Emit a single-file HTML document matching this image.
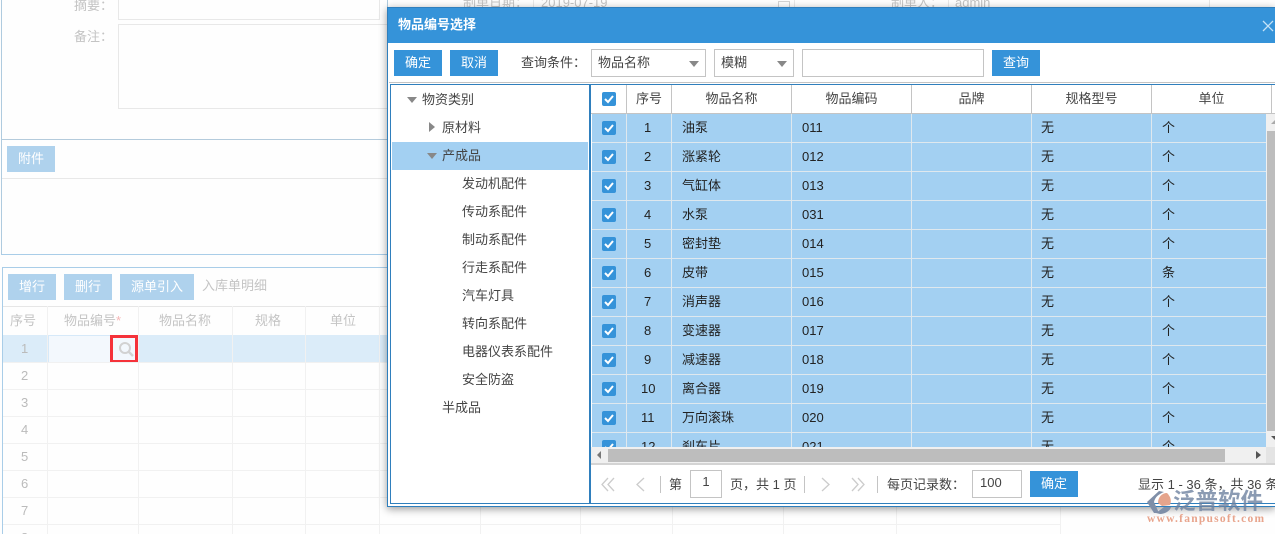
<!DOCTYPE html>
<html><head><meta charset="utf-8"><style>
*{box-sizing:border-box}
html,body{margin:0;padding:0;width:1275px;height:534px;overflow:hidden;background:#fefefe}
body{position:relative;font:13px/20px "Liberation Sans","Noto Sans CJK SC",sans-serif;color:#333}
div,span{position:absolute;white-space:nowrap}
.g{color:#c4c4c4}
.bb{background:#afd2ed;color:#fff;height:26px;line-height:25px;text-align:center}
.b{background:#3593d9;color:#fff;height:26px;line-height:25px;text-align:center;width:48px}
.hl{height:1px;background:#f1f1f1}
.vl{width:1px;background:#f1f1f1}
.th{top:85px;height:28px;line-height:27px;text-align:center;border-right:1px solid #c4c4c4;color:#444}
.t{left:0;height:20px;color:#444}
.row{left:592px;width:674px;height:29px;background:#a3d0f2;border-bottom:1px solid #dfe8ee;color:#222}
.row span{top:3px;height:22px;line-height:22px}
.sep{top:0;width:1px;height:29px;background:#dfe8ee}
.cb{left:10px;top:7px;width:14px;height:14px;background:#3593d9;border-radius:2px}
.cb svg{position:absolute;left:0;top:0}
.sel{top:49px;height:28px;border:1px solid #c4c4c4;line-height:25px;padding-left:6px;color:#444;background:#fff}
.sel i{position:absolute;top:11px;width:0;height:0;border:5px solid transparent;border-top:6px solid #888;border-bottom:0}
.gt{width:0;height:0;border:5px solid transparent;border-top:6px solid #888;border-bottom:0}
</style></head><body>
<!-- background form -->
<div style="left:1px;top:-2px;width:387px;height:257px;border:1px solid #afcbdf;border-bottom-color:#a9cde8"></div>
<div class="g" style="left:74px;top:-4px">摘要：</div>
<div style="left:118px;top:-5px;width:262px;height:25px;border:1px solid #e8e8e8"></div>
<div class="g" style="left:74px;top:27px">备注：</div>
<div style="left:118px;top:24px;width:270px;height:85px;border:1px solid #e8e8e8"></div>
<div style="left:2px;top:139px;width:386px;height:1px;background:#b4cbdc"></div>
<div class="bb" style="left:7px;top:146px;width:48px">附件</div>
<div style="left:2px;top:178px;width:386px;height:1px;background:#e8e8e8"></div>
<div class="g" style="left:463px;top:-7px;font-size:13px">制单日期：</div>
<div style="left:533px;top:0;width:1px;height:8px;background:#e8e8e8"></div>
<div class="g" style="left:541px;top:-7px">2019-07-19</div>
<div style="left:778px;top:1px;width:12px;height:7px;border:1px solid #d4d4d4"></div>
<div style="left:794px;top:0;width:1px;height:8px;background:#e8e8e8"></div>
<div class="g" style="left:891px;top:-7px">制单人：</div>
<div style="left:948px;top:0;width:1px;height:8px;background:#e8e8e8"></div>
<div class="g" style="left:955px;top:-7px">admin</div>
<div style="left:1209px;top:0;width:1px;height:8px;background:#e8e8e8"></div>
<!-- detail grid -->
<div style="left:2px;top:267px;width:386px;height:267px;border:1px solid #a9cde8;border-bottom:0;border-right:0"></div>
<div class="bb" style="left:8px;top:274px;width:48px">增行</div>
<div class="bb" style="left:64px;top:274px;width:48px">删行</div>
<div class="bb" style="left:120px;top:274px;width:74px">源单引入</div>
<div class="g" style="left:202px;top:276px">入库单明细</div>
<div style="left:3px;top:306px;width:385px;height:1px;background:#e6e6e6"></div>
<div class="g" style="left:10px;top:311px">序号</div>
<div class="g" style="left:64px;top:311px">物品编号<span style="left:52px;top:0;color:#f5b5b5">*</span></div>
<div class="g" style="left:159px;top:311px">物品名称</div>
<div class="g" style="left:255px;top:311px">规格</div>
<div class="g" style="left:330px;top:311px">单位</div>
<div style="left:3px;top:335px;width:385px;height:27px;background:#dbecf9"></div>
<div style="left:48px;top:335px;width:62px;height:28px;background:#f3f8fd;border:1px solid #d6e9f9;border-right:0"></div>
<div style="left:110px;top:335px;width:28px;height:28px;border:3px solid #f5323a;background:#f3f8fd"></div>
<svg style="position:absolute;left:118px;top:342px" width="17" height="16" viewBox="0 0 17 16"><circle cx="7" cy="6" r="5" fill="none" stroke="#d2d2d2" stroke-width="2"/><path d="M11 10l4 4" stroke="#d2d2d2" stroke-width="2.4" fill="none"/></svg>
<div class="hl" style="left:3px;top:389px;width:1058px"></div>
<div class="hl" style="left:3px;top:416px;width:1058px"></div>
<div class="hl" style="left:3px;top:443px;width:1058px"></div>
<div class="hl" style="left:3px;top:470px;width:1058px"></div>
<div class="hl" style="left:3px;top:497px;width:1058px"></div>
<div class="hl" style="left:3px;top:524px;width:1058px"></div>
<div class="hl" style="left:3px;top:362px;width:385px"></div>
<div class="vl" style="left:47px;top:306px;height:228px"></div>
<div class="vl" style="left:138px;top:306px;height:228px"></div>
<div class="vl" style="left:232px;top:306px;height:228px"></div>
<div class="vl" style="left:305px;top:306px;height:228px"></div>
<div class="vl" style="left:379px;top:306px;height:228px"></div>
<div class="vl" style="left:480px;top:506px;height:28px"></div>
<div class="vl" style="left:580px;top:506px;height:28px"></div>
<div class="vl" style="left:672px;top:506px;height:28px"></div>
<div class="vl" style="left:783px;top:506px;height:28px"></div>
<div class="vl" style="left:896px;top:506px;height:28px"></div>
<div class="vl" style="left:1060px;top:506px;height:28px"></div>
<div class="g" style="left:21px;top:339px;color:#bbb">1</div>
<div class="g" style="left:21px;top:366px;color:#bbb">2</div>
<div class="g" style="left:21px;top:393px;color:#bbb">3</div>
<div class="g" style="left:21px;top:420px;color:#bbb">4</div>
<div class="g" style="left:21px;top:447px;color:#bbb">5</div>
<div class="g" style="left:21px;top:474px;color:#bbb">6</div>
<div class="g" style="left:21px;top:501px;color:#bbb">7</div>
<div class="g" style="left:21px;top:528px;color:#bbb">8</div>

<!-- dialog -->
<div style="left:387px;top:7px;width:888px;height:500px;background:#fff;border:1px solid #2f7fbd;border-right:0;box-shadow:0 2px 8px rgba(0,0,0,.4);overflow:hidden">
<div style="left:0;top:0;width:887px;height:35px;background:#3593d9"></div>
<div style="left:10px;top:7px;color:#fff;font-weight:bold;font-size:13px">物品编号选择</div>
<svg style="position:absolute;left:874px;top:12px" width="12" height="12" viewBox="0 0 12 12"><path d="M1 1l10 10M11 1L1 11" stroke="#c4e2f7" stroke-width="1.3" fill="none"/></svg>
</div>
<div class="b" style="left:394px;top:50px">确定</div>
<div class="b" style="left:450px;top:50px">取消</div>
<div style="left:521px;top:53px;color:#444">查询条件：</div>
<div class="sel" style="left:591px;width:115px">物品名称<i style="left:97px"></i></div>
<div class="sel" style="left:714px;width:80px">模糊<i style="left:62px"></i></div>
<div class="sel" style="left:802px;width:182px"></div>
<div class="b" style="left:992px;top:50px">查询</div>
<div style="left:389px;top:82px;width:886px;height:1px;background:#c4c4c4"></div>
<div style="left:390px;top:84px;width:885px;height:1px;background:#2f7fbd"></div>
<div style="left:390px;top:503px;width:885px;height:1px;background:#2f7fbd"></div>
<div style="left:390px;top:84px;width:1px;height:420px;background:#2f7fbd"></div>
<div style="left:589px;top:84px;width:2px;height:420px;background:#2f7fbd"></div>
<!-- tree -->
<div style="left:392px;top:142px;width:196px;height:28px;background:#a3d0f2"></div>
<div class="gt" style="left:407px;top:97px"></div>
<div class="t" style="left:422px;top:90px">物资类别</div>
<div style="left:429px;top:122px;width:0;height:0;border:5px solid transparent;border-left:6px solid #888;border-right:0"></div>
<div class="t" style="left:442px;top:118px">原材料</div>
<div class="gt" style="left:427px;top:153px"></div>
<div class="t" style="left:442px;top:146px">产成品</div>
<div class="t" style="left:462px;top:174px">发动机配件</div>
<div class="t" style="left:462px;top:202px">传动系配件</div>
<div class="t" style="left:462px;top:230px">制动系配件</div>
<div class="t" style="left:462px;top:258px">行走系配件</div>
<div class="t" style="left:462px;top:286px">汽车灯具</div>
<div class="t" style="left:462px;top:314px">转向系配件</div>
<div class="t" style="left:462px;top:342px">电器仪表系配件</div>
<div class="t" style="left:462px;top:370px">安全防盗</div>
<div class="t" style="left:442px;top:398px">半成品</div>
<!-- table header -->
<div class="th" style="left:591px;width:36px"></div>
<div class="cb" style="left:602px;top:92px"><svg width="14" height="14" viewBox="0 0 14 14"><path d="M3 7l3 3 5-6" stroke="#fff" stroke-width="2" fill="none"/></svg></div>
<div class="th" style="left:627px;width:45px">序号</div>
<div class="th" style="left:672px;width:120px">物品名称</div>
<div class="th" style="left:792px;width:120px">物品编码</div>
<div class="th" style="left:912px;width:120px">品牌</div>
<div class="th" style="left:1032px;width:120px">规格型号</div>
<div class="th" style="left:1152px;width:120px">单位</div>
<div style="left:591px;top:113px;width:684px;height:1px;background:#c4c4c4"></div>
<!-- rows -->
<div style="left:592px;top:114px;width:674px;height:333px;overflow:hidden">
<div class="row" style="left:0;top:0"><i class="sep" style="position:absolute;left:34px"></i><i class="sep" style="position:absolute;left:79px"></i><i class="sep" style="position:absolute;left:199px"></i><i class="sep" style="position:absolute;left:319px"></i><i class="sep" style="position:absolute;left:439px"></i><i class="sep" style="position:absolute;left:559px"></i><div class="cb"><svg width="14" height="14" viewBox="0 0 14 14"><path d="M3 7l3 3 5-6" stroke="#fff" stroke-width="2" fill="none"/></svg></div><span style="left:52px">1</span><span style="left:90px">油泵</span><span style="left:210px">011</span><span style="left:449px">无</span><span style="left:570px">个</span></div>
<div class="row" style="left:0;top:29px"><i class="sep" style="position:absolute;left:34px"></i><i class="sep" style="position:absolute;left:79px"></i><i class="sep" style="position:absolute;left:199px"></i><i class="sep" style="position:absolute;left:319px"></i><i class="sep" style="position:absolute;left:439px"></i><i class="sep" style="position:absolute;left:559px"></i><div class="cb"><svg width="14" height="14" viewBox="0 0 14 14"><path d="M3 7l3 3 5-6" stroke="#fff" stroke-width="2" fill="none"/></svg></div><span style="left:52px">2</span><span style="left:90px">涨紧轮</span><span style="left:210px">012</span><span style="left:449px">无</span><span style="left:570px">个</span></div>
<div class="row" style="left:0;top:58px"><i class="sep" style="position:absolute;left:34px"></i><i class="sep" style="position:absolute;left:79px"></i><i class="sep" style="position:absolute;left:199px"></i><i class="sep" style="position:absolute;left:319px"></i><i class="sep" style="position:absolute;left:439px"></i><i class="sep" style="position:absolute;left:559px"></i><div class="cb"><svg width="14" height="14" viewBox="0 0 14 14"><path d="M3 7l3 3 5-6" stroke="#fff" stroke-width="2" fill="none"/></svg></div><span style="left:52px">3</span><span style="left:90px">气缸体</span><span style="left:210px">013</span><span style="left:449px">无</span><span style="left:570px">个</span></div>
<div class="row" style="left:0;top:87px"><i class="sep" style="position:absolute;left:34px"></i><i class="sep" style="position:absolute;left:79px"></i><i class="sep" style="position:absolute;left:199px"></i><i class="sep" style="position:absolute;left:319px"></i><i class="sep" style="position:absolute;left:439px"></i><i class="sep" style="position:absolute;left:559px"></i><div class="cb"><svg width="14" height="14" viewBox="0 0 14 14"><path d="M3 7l3 3 5-6" stroke="#fff" stroke-width="2" fill="none"/></svg></div><span style="left:52px">4</span><span style="left:90px">水泵</span><span style="left:210px">031</span><span style="left:449px">无</span><span style="left:570px">个</span></div>
<div class="row" style="left:0;top:116px"><i class="sep" style="position:absolute;left:34px"></i><i class="sep" style="position:absolute;left:79px"></i><i class="sep" style="position:absolute;left:199px"></i><i class="sep" style="position:absolute;left:319px"></i><i class="sep" style="position:absolute;left:439px"></i><i class="sep" style="position:absolute;left:559px"></i><div class="cb"><svg width="14" height="14" viewBox="0 0 14 14"><path d="M3 7l3 3 5-6" stroke="#fff" stroke-width="2" fill="none"/></svg></div><span style="left:52px">5</span><span style="left:90px">密封垫</span><span style="left:210px">014</span><span style="left:449px">无</span><span style="left:570px">个</span></div>
<div class="row" style="left:0;top:145px"><i class="sep" style="position:absolute;left:34px"></i><i class="sep" style="position:absolute;left:79px"></i><i class="sep" style="position:absolute;left:199px"></i><i class="sep" style="position:absolute;left:319px"></i><i class="sep" style="position:absolute;left:439px"></i><i class="sep" style="position:absolute;left:559px"></i><div class="cb"><svg width="14" height="14" viewBox="0 0 14 14"><path d="M3 7l3 3 5-6" stroke="#fff" stroke-width="2" fill="none"/></svg></div><span style="left:52px">6</span><span style="left:90px">皮带</span><span style="left:210px">015</span><span style="left:449px">无</span><span style="left:570px">条</span></div>
<div class="row" style="left:0;top:174px"><i class="sep" style="position:absolute;left:34px"></i><i class="sep" style="position:absolute;left:79px"></i><i class="sep" style="position:absolute;left:199px"></i><i class="sep" style="position:absolute;left:319px"></i><i class="sep" style="position:absolute;left:439px"></i><i class="sep" style="position:absolute;left:559px"></i><div class="cb"><svg width="14" height="14" viewBox="0 0 14 14"><path d="M3 7l3 3 5-6" stroke="#fff" stroke-width="2" fill="none"/></svg></div><span style="left:52px">7</span><span style="left:90px">消声器</span><span style="left:210px">016</span><span style="left:449px">无</span><span style="left:570px">个</span></div>
<div class="row" style="left:0;top:203px"><i class="sep" style="position:absolute;left:34px"></i><i class="sep" style="position:absolute;left:79px"></i><i class="sep" style="position:absolute;left:199px"></i><i class="sep" style="position:absolute;left:319px"></i><i class="sep" style="position:absolute;left:439px"></i><i class="sep" style="position:absolute;left:559px"></i><div class="cb"><svg width="14" height="14" viewBox="0 0 14 14"><path d="M3 7l3 3 5-6" stroke="#fff" stroke-width="2" fill="none"/></svg></div><span style="left:52px">8</span><span style="left:90px">变速器</span><span style="left:210px">017</span><span style="left:449px">无</span><span style="left:570px">个</span></div>
<div class="row" style="left:0;top:232px"><i class="sep" style="position:absolute;left:34px"></i><i class="sep" style="position:absolute;left:79px"></i><i class="sep" style="position:absolute;left:199px"></i><i class="sep" style="position:absolute;left:319px"></i><i class="sep" style="position:absolute;left:439px"></i><i class="sep" style="position:absolute;left:559px"></i><div class="cb"><svg width="14" height="14" viewBox="0 0 14 14"><path d="M3 7l3 3 5-6" stroke="#fff" stroke-width="2" fill="none"/></svg></div><span style="left:52px">9</span><span style="left:90px">减速器</span><span style="left:210px">018</span><span style="left:449px">无</span><span style="left:570px">个</span></div>
<div class="row" style="left:0;top:261px"><i class="sep" style="position:absolute;left:34px"></i><i class="sep" style="position:absolute;left:79px"></i><i class="sep" style="position:absolute;left:199px"></i><i class="sep" style="position:absolute;left:319px"></i><i class="sep" style="position:absolute;left:439px"></i><i class="sep" style="position:absolute;left:559px"></i><div class="cb"><svg width="14" height="14" viewBox="0 0 14 14"><path d="M3 7l3 3 5-6" stroke="#fff" stroke-width="2" fill="none"/></svg></div><span style="left:49px">10</span><span style="left:90px">离合器</span><span style="left:210px">019</span><span style="left:449px">无</span><span style="left:570px">个</span></div>
<div class="row" style="left:0;top:290px"><i class="sep" style="position:absolute;left:34px"></i><i class="sep" style="position:absolute;left:79px"></i><i class="sep" style="position:absolute;left:199px"></i><i class="sep" style="position:absolute;left:319px"></i><i class="sep" style="position:absolute;left:439px"></i><i class="sep" style="position:absolute;left:559px"></i><div class="cb"><svg width="14" height="14" viewBox="0 0 14 14"><path d="M3 7l3 3 5-6" stroke="#fff" stroke-width="2" fill="none"/></svg></div><span style="left:49px">11</span><span style="left:90px">万向滚珠</span><span style="left:210px">020</span><span style="left:449px">无</span><span style="left:570px">个</span></div>
<div class="row" style="left:0;top:319px"><i class="sep" style="position:absolute;left:34px"></i><i class="sep" style="position:absolute;left:79px"></i><i class="sep" style="position:absolute;left:199px"></i><i class="sep" style="position:absolute;left:319px"></i><i class="sep" style="position:absolute;left:439px"></i><i class="sep" style="position:absolute;left:559px"></i><div class="cb"><svg width="14" height="14" viewBox="0 0 14 14"><path d="M3 7l3 3 5-6" stroke="#fff" stroke-width="2" fill="none"/></svg></div><span style="left:49px">12</span><span style="left:90px">刹车片</span><span style="left:210px">021</span><span style="left:449px">无</span><span style="left:570px">个</span></div>
</div>
<!-- scrollbars -->
<div style="left:1266px;top:114px;width:9px;height:333px;background:#f0f0f0"></div>
<div style="left:1267px;top:131px;width:8px;height:300px;background:#bdbdbd"></div>
<div style="left:1271px;top:120px;width:0;height:0;border:4px solid transparent;border-bottom:4px solid #aaa;border-top:0"></div>
<div style="left:1271px;top:436px;width:0;height:0;border:4px solid transparent;border-top:4px solid #555;border-bottom:0"></div>
<div style="left:591px;top:447px;width:684px;height:16px;background:#f0f0f0"></div>
<div style="left:608px;top:449px;width:617px;height:13px;background:#bdbdbd"></div>
<div style="left:597px;top:451px;width:0;height:0;border:4px solid transparent;border-right:4px solid #777;border-left:0"></div>
<div style="left:1256px;top:451px;width:0;height:0;border:4px solid transparent;border-left:5px solid #555;border-right:0"></div>
<div style="left:1266px;top:447px;width:9px;height:16px;background:#e4e4e4"></div>
<div style="left:591px;top:463px;width:684px;height:2px;background:#d4d4d4"></div>
<!-- pager -->
<svg style="position:absolute;left:600px;top:476px" width="270" height="18" viewBox="0 0 270 18"><g fill="none" stroke="#ccc" stroke-width="1.3"><path d="M8 2L2 8.500L8 15M14 2L8 8.500L14 15"/><path d="M44 2L37 8.500L44 15"/><path d="M222 2L229 8.500L222 15"/><path d="M252 2L258 8.500L252 15M258 2L264 8.500L258 15"/></g></svg>
<div style="left:660px;top:476px;width:1px;height:17px;background:#c4c4c4"></div>
<div class="t" style="left:669px;top:475px">第</div>
<div style="left:690px;top:470px;width:32px;height:28px;border:1px solid #c4c4c4;text-align:center;line-height:22px;color:#444">1</div>
<div class="t" style="left:730px;top:475px">页，共 1 页</div>
<div style="left:804px;top:476px;width:1px;height:17px;background:#c4c4c4"></div>
<div style="left:877px;top:476px;width:1px;height:17px;background:#c4c4c4"></div>
<div class="t" style="left:887px;top:475px">每页记录数：</div>
<div style="left:972px;top:470px;width:50px;height:28px;border:1px solid #c4c4c4;line-height:23px;padding-left:7px;color:#444">100</div>
<div class="b" style="left:1030px;top:471px">确定</div>
<div class="t" style="left:1138px;top:475px">显示 1 - 36 条，共 36 条</div>
<!-- watermark -->
<svg style="position:absolute;left:1145px;top:488px" width="30" height="28" viewBox="0 0 30 28"><path d="M14 3L2 14 9 25h5L9 14C10 9 14 6 19 4z" fill="#7f8fa8"/><path d="M13 15C13 9 17 5 22 5 25 8 27 12 25 17L17 18z" fill="#e5a48c"/><path d="M11 25L19 19h7C25 23 20 26 15 26z" fill="#7f8fa8"/></svg>
<div style="left:1173px;top:488px;font-size:22.500px;line-height:28px;font-weight:bold;color:rgba(110,130,160,.8)">泛普软件</div>
<div style="left:1147px;top:511px;font:bold 11.500px/16px 'Liberation Serif',serif;letter-spacing:1.250px;color:#e8a48c">www.fanpusoft.com</div>
</body></html>
